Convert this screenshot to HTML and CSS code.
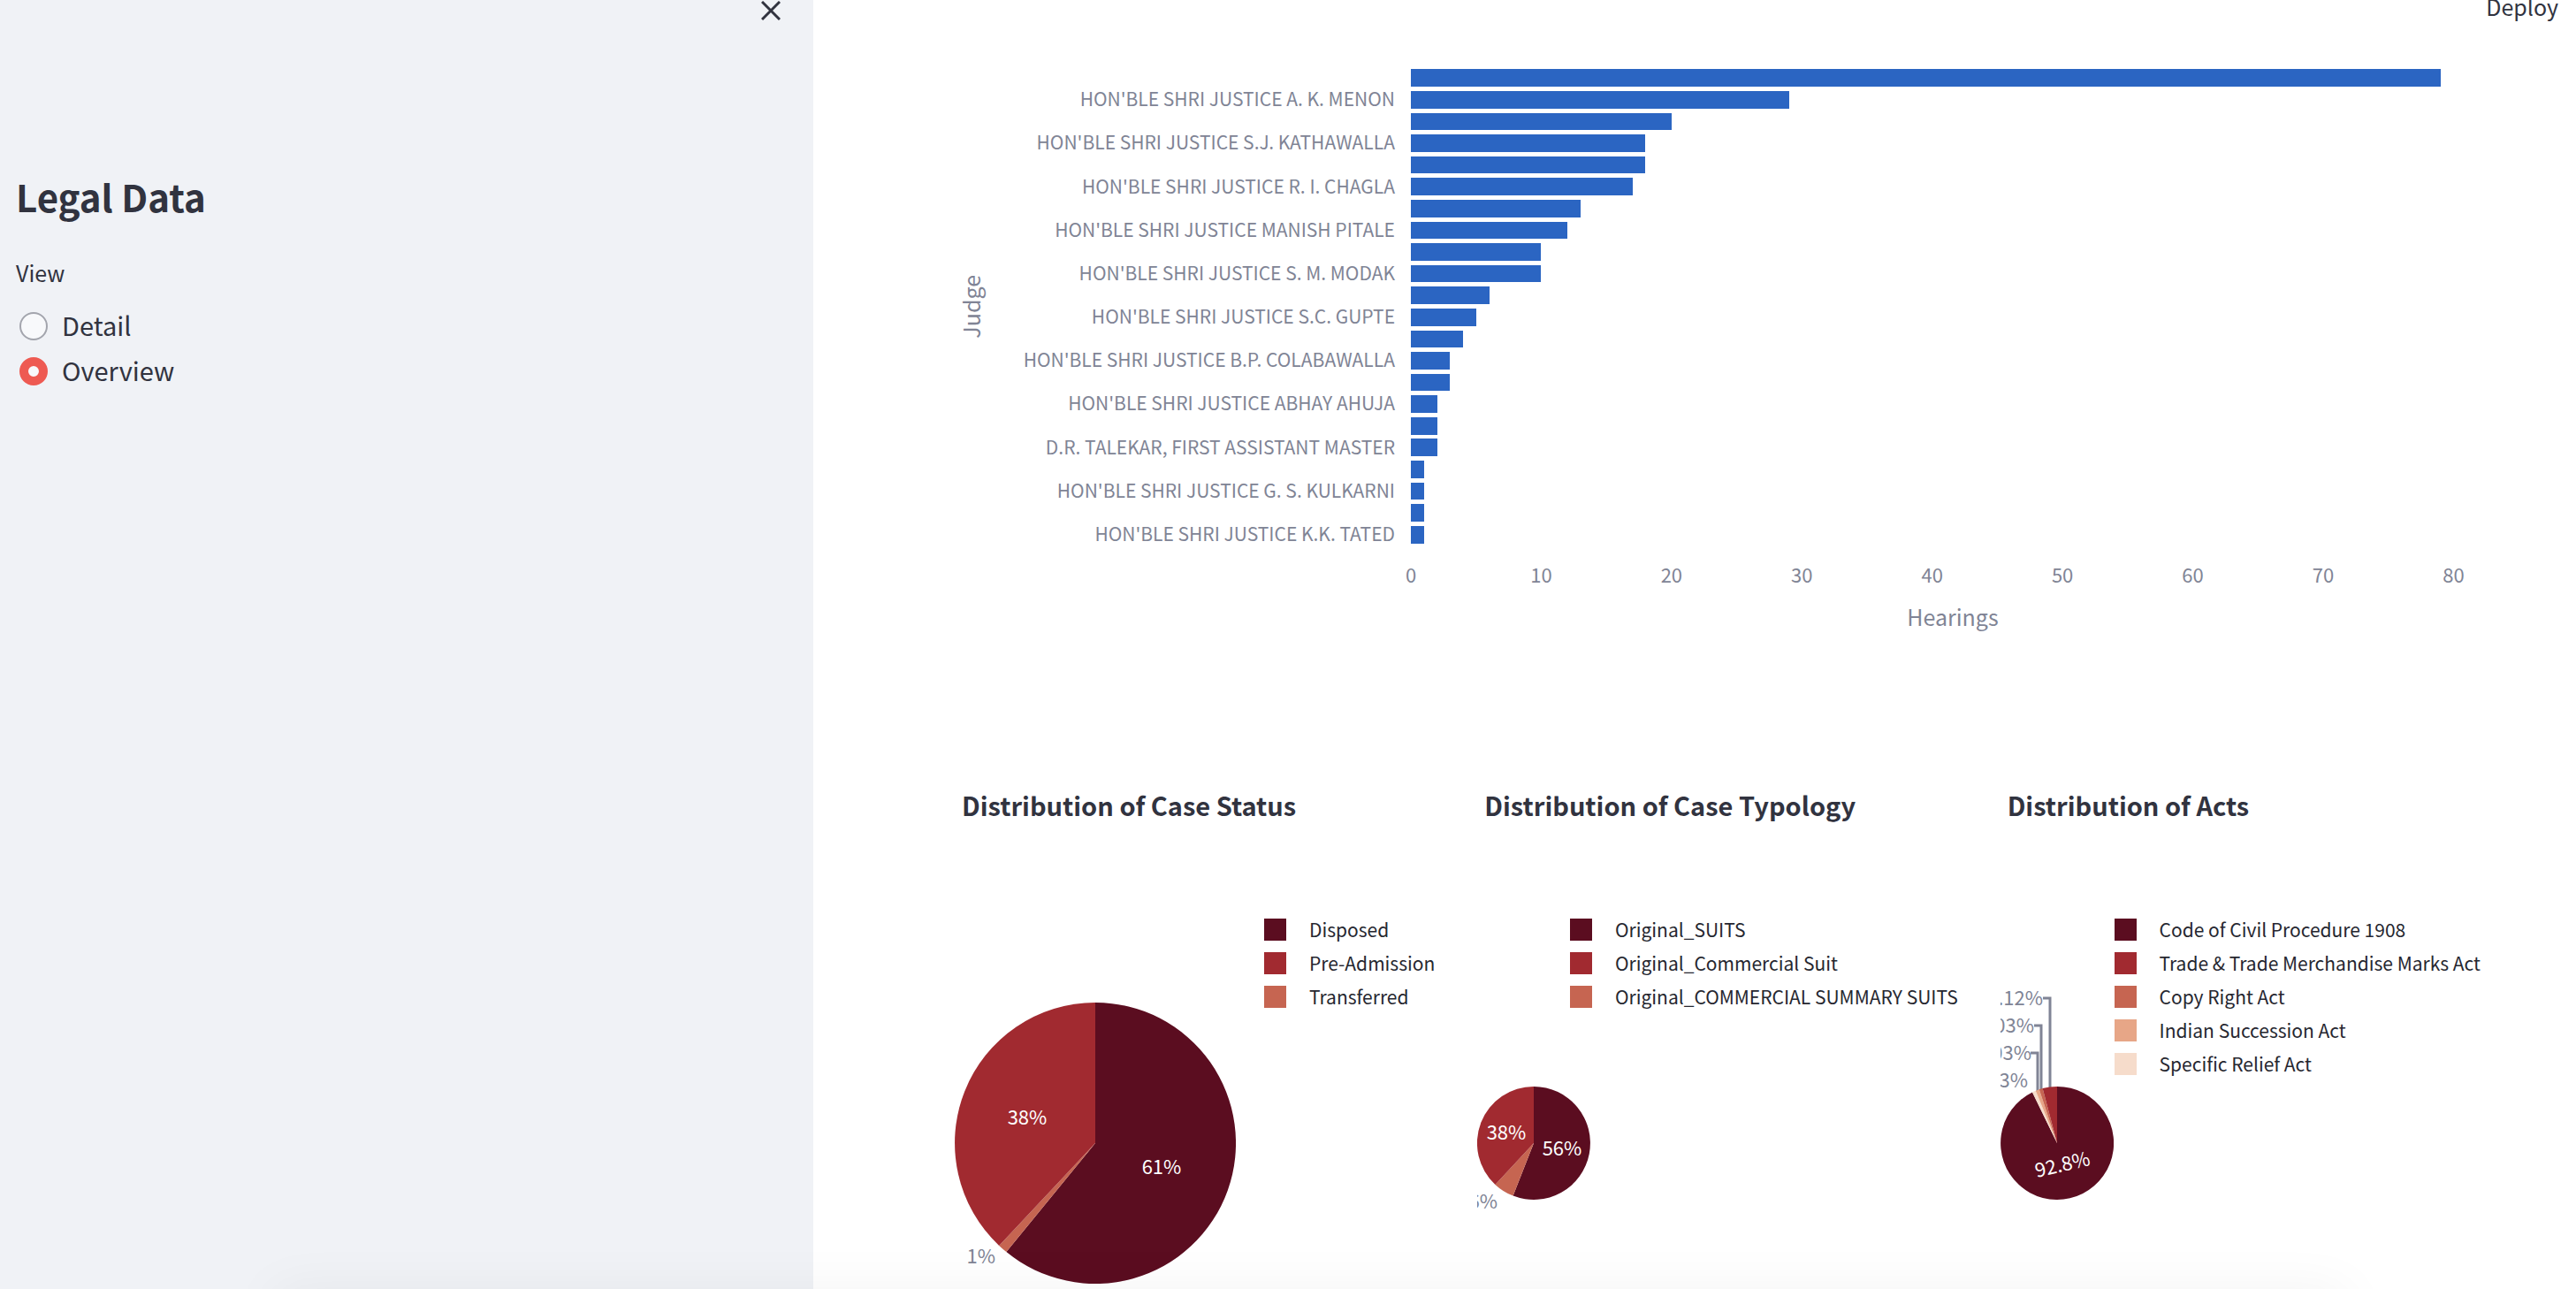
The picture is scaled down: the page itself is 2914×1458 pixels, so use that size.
FILE: index.html
```html
<!DOCTYPE html>
<html lang="en">
<head>
<meta charset="utf-8">
<meta name="viewport" content="width=device-width, initial-scale=1">
<title>Legal Data</title>
<link rel="stylesheet" href="styles.css">
</head>
<body>
<div class="app">
  <aside class="sidebar">
    <div class="sidebar-head">
      <button class="close" type="button" aria-label="Close sidebar">
        <svg viewBox="0 0 22 22" width="22" height="22" aria-hidden="true"><path d="M1 1 21 21M21 1 1 21"/></svg>
      </button>
    </div>
    <h1 class="app-title">Legal Data</h1>
    <fieldset class="view">
      <legend>View</legend>
      <div class="options">
        <label class="option"><input type="radio" name="view" value="detail"><span>Detail</span></label>
        <label class="option"><input type="radio" name="view" value="overview" checked><span>Overview</span></label>
      </div>
    </fieldset>
  </aside>

  <main class="main">
    <header class="toolbar"><button class="deploy" type="button">Deploy</button></header>

    <section class="bar-chart" aria-label="Hearings by judge">
      <div class="y-title"><span>Judge</span></div>
      <div class="y-labels">
        <span>HON'BLE SHRI JUSTICE A. K. MENON</span>
        <span>HON'BLE SHRI JUSTICE S.J. KATHAWALLA</span>
        <span>HON'BLE SHRI JUSTICE R. I. CHAGLA</span>
        <span>HON'BLE SHRI JUSTICE MANISH PITALE</span>
        <span>HON'BLE SHRI JUSTICE S. M. MODAK</span>
        <span>HON'BLE SHRI JUSTICE S.C. GUPTE</span>
        <span>HON'BLE SHRI JUSTICE B.P. COLABAWALLA</span>
        <span>HON'BLE SHRI JUSTICE ABHAY AHUJA</span>
        <span>D.R. TALEKAR, FIRST ASSISTANT MASTER</span>
        <span>HON'BLE SHRI JUSTICE G. S. KULKARNI</span>
        <span>HON'BLE SHRI JUSTICE K.K. TATED</span>
      </div>
      <div class="bars">
        <div class="bar" style="width:95%"></div>
        <div class="bar" style="width:34.87%"></div>
        <div class="bar" style="width:24.05%"></div>
        <div class="bar" style="width:21.65%"></div>
        <div class="bar" style="width:21.65%"></div>
        <div class="bar" style="width:20.44%"></div>
        <div class="bar" style="width:15.63%"></div>
        <div class="bar" style="width:14.43%"></div>
        <div class="bar" style="width:12.03%"></div>
        <div class="bar" style="width:12.03%"></div>
        <div class="bar" style="width:7.22%"></div>
        <div class="bar" style="width:6.01%"></div>
        <div class="bar" style="width:4.81%"></div>
        <div class="bar" style="width:3.61%"></div>
        <div class="bar" style="width:3.61%"></div>
        <div class="bar" style="width:2.41%"></div>
        <div class="bar" style="width:2.41%"></div>
        <div class="bar" style="width:2.41%"></div>
        <div class="bar" style="width:1.2%"></div>
        <div class="bar" style="width:1.2%"></div>
        <div class="bar" style="width:1.2%"></div>
        <div class="bar" style="width:1.2%"></div>
      </div>
      <div class="x-axis">
        <div class="ticks">
          <span>0</span><span>10</span><span>20</span><span>30</span><span>40</span><span>50</span><span>60</span><span>70</span><span>80</span>
        </div>
        <div class="x-title">Hearings</div>
      </div>
    </section>

    <div class="pies">
      <section class="panel">
        <h2>Distribution of Case Status</h2>
        <div class="plot">
          <svg class="pie" width="318" height="345" viewBox="0 0 318 345" role="img" aria-label="Case status">
            <path class="c1" d="M159 180V21A159 159 0 1 1 58.4 303.1Z"/>
            <path class="c3" d="M159 180 58.4 303.1A159 159 0 0 1 50.2 295.9Z"/>
            <path class="c2" d="M159 180 50.2 295.9A159 159 0 0 1 159 21Z"/>
            <text class="in" x="82" y="159">38%</text>
            <text class="in" x="234" y="215">61%</text>
            <text class="out" x="46" y="316">1%</text>
          </svg>
          <ul class="legend">
            <li><i class="k1"></i>Disposed</li>
            <li><i class="k2"></i>Pre-Admission</li>
            <li><i class="k3"></i>Transferred</li>
          </ul>
        </div>
      </section>

      <section class="panel">
        <h2>Distribution of Case Typology</h2>
        <div class="plot">
          <svg class="pie" width="128" height="345" viewBox="0 0 128 345" role="img" aria-label="Case typology">
            <path class="c1" d="M64 180V116A64 64 0 1 1 40.6 239.6Z"/>
            <path class="c3" d="M64 180 40.6 239.6A64 64 0 0 1 20.4 226.9Z"/>
            <path class="c2" d="M64 180 20.4 226.9A64 64 0 0 1 64 116Z"/>
            <text class="in" x="33" y="176">38%</text>
            <text class="in" x="96" y="194">56%</text>
            <text class="out" x="23" y="254">6%</text>
          </svg>
          <ul class="legend">
            <li><i class="k1"></i>Original_SUITS</li>
            <li><i class="k2"></i>Original_Commercial Suit</li>
            <li><i class="k3"></i>Original_COMMERCIAL SUMMARY SUITS</li>
          </ul>
        </div>
      </section>

      <section class="panel">
        <h2>Distribution of Acts</h2>
        <div class="plot">
          <svg class="pie" width="128" height="345" viewBox="0 0 128 345" role="img" aria-label="Acts">
            <path class="lead" d="M48 16H56V118M38 47H46V120M34 78H42V122"/>
            <path class="c1" d="M64 180V116A64 64 0 1 1 36 122.5Z"/>
            <path class="c5" d="M64 180 36 122.5A64 64 0 0 1 39.8 120.8Z"/>
            <path class="c4" d="M64 180 39.8 120.8A64 64 0 0 1 43.7 119.3Z"/>
            <path class="c3" d="M64 180 43.7 119.3A64 64 0 0 1 47.6 118.1Z"/>
            <path class="c2" d="M64 180 47.6 118.1A64 64 0 0 1 64 116Z"/>
            <text class="out" x="48" y="24">4.12%</text>
            <text class="out" x="38" y="55">1.03%</text>
            <text class="out" x="35" y="86">1.03%</text>
            <text class="out" x="31" y="117">1.03%</text>
            <text class="in" x="70" y="212" transform="rotate(-13 70 204)">92.8%</text>
          </svg>
          <ul class="legend">
            <li><i class="k1"></i>Code of Civil Procedure 1908</li>
            <li><i class="k2"></i>Trade &amp; Trade Merchandise Marks Act</li>
            <li><i class="k3"></i>Copy Right Act</li>
            <li><i class="k4"></i>Indian Succession Act</li>
            <li><i class="k5"></i>Specific Relief Act</li>
          </ul>
        </div>
      </section>
    </div>
  </main>
</div>
</body>
</html>
```
FILE: styles.css
```css
:root {
  --ink: #31333f;
  --muted: #808495;
  --c1: #5b0d20;
  --c2: #a12a30;
  --c3: #c66551;
  --c4: #e7a687;
  --c5: #f6dccb;
}
* { box-sizing: border-box; }
body {
  margin: 0;
  color: var(--ink);
  background: #fff;
  font-family: "Noto Sans CJK SC", "Noto Sans", sans-serif;
  font-size: 22px;
}
/* soft shade along the lower window edge */
body::after {
  content: "";
  position: fixed;
  top: 100%;
  left: 310px;
  right: 260px;
  height: 60px;
  box-shadow: 0 0 60px rgba(0, 0, 0, 0.05);
  pointer-events: none;
}
button { border: 0; padding: 0; background: none; color: inherit; font: inherit; cursor: pointer; }

.app { display: flex; min-height: 100vh; }

.sidebar { flex: 0 0 920px; padding: 1px 37px 0 18px; background: #f0f2f6; }
.sidebar-head { display: flex; justify-content: flex-end; margin-bottom: 171px; }
.close { display: block; height: 22px; }
.close svg { display: block; fill: none; stroke: var(--ink); stroke-width: 3; }
.app-title { margin: 0 0 40px; font-size: 42px; line-height: 56px; font-weight: 700; }
.view { margin: 0; padding: 0; border: 0; }
.view legend { padding: 0; margin-bottom: 25px; font-size: 25px; line-height: 36px; }
.options { display: flex; flex-direction: column; gap: 15px; }
.option { display: flex; align-items: center; gap: 16px; padding-left: 4px; font-size: 29px; line-height: 32px; }
.option span { padding-bottom: 4px; }
.option input {
  appearance: none;
  width: 32px;
  height: 32px;
  margin: 0;
  border: 2px solid #a3a5ad;
  border-radius: 50%;
  background: #f8f9fb;
}
.option input:checked { border: 10px solid #ee5a52; }

.main { flex: 1; min-width: 0; padding: 0 92px 0 160px; }
.toolbar { display: flex; justify-content: flex-end; margin: 0 -72px 62px 0; }
.deploy { font-size: 25px; line-height: 14px; }

.bar-chart {
  display: grid;
  grid-template-columns: 40px 476px 1fr;
  grid-template-rows: 541px auto;
  color: var(--muted);
  margin-bottom: 177px;
}
.y-title { display: flex; align-items: center; justify-content: flex-start; font-size: 25px; line-height: 36px; }
.y-title span { writing-mode: vertical-rl; transform: rotate(180deg); }
.y-labels { display: grid; grid-auto-rows: 1fr; padding-right: 18px; font-size: 21px; }
.y-labels span { display: flex; align-items: flex-end; justify-content: flex-end; line-height: 28px; white-space: nowrap; }
.bars { display: grid; grid-auto-rows: 1fr; }
.bar { height: 80%; align-self: center; background: #2b65c2; }
.x-axis { grid-column: 3; padding-top: 20px; }
.ticks { display: flex; justify-content: space-between; width: 96.2%; line-height: 24px; }
.ticks span { display: flex; justify-content: center; width: 0; }
.x-title { margin-top: 20px; text-align: center; font-size: 25px; line-height: 32px; }

.pies { display: grid; grid-template-columns: repeat(3, minmax(0, 1fr)); gap: 32px; }
.panel h2 { margin: 0 0 109px; padding-left: 8px; font-size: 29px; line-height: 40px; font-weight: 700; white-space: nowrap; }
.plot { display: grid; }
.plot > * { grid-area: 1 / 1; }
.pie { display: block; justify-self: start; margin-top: 74px; overflow: hidden; }
.pie text { font-size: 22px; }
.pie .in { fill: #fff; text-anchor: middle; }
.pie .out { fill: var(--muted); text-anchor: end; }
.lead { fill: none; stroke: var(--muted); stroke-width: 3; }
.c1 { fill: var(--c1); }
.c2 { fill: var(--c2); }
.c3 { fill: var(--c3); }
.c4 { fill: var(--c4); }
.c5 { fill: var(--c5); }

.legend {
  display: flex;
  flex-direction: column;
  gap: 13px;
  justify-self: end;
  align-self: start;
  margin: 0;
  padding: 0 16px 0 0;
  list-style: none;
  color: #262730;
  font-size: 21px;
}
.legend li { display: flex; align-items: center; gap: 26px; line-height: 25px; white-space: nowrap; }
.legend i { width: 25px; height: 25px; }
.k1 { background: var(--c1); }
.k2 { background: var(--c2); }
.k3 { background: var(--c3); }
.k4 { background: var(--c4); }
.k5 { background: var(--c5); }
```
